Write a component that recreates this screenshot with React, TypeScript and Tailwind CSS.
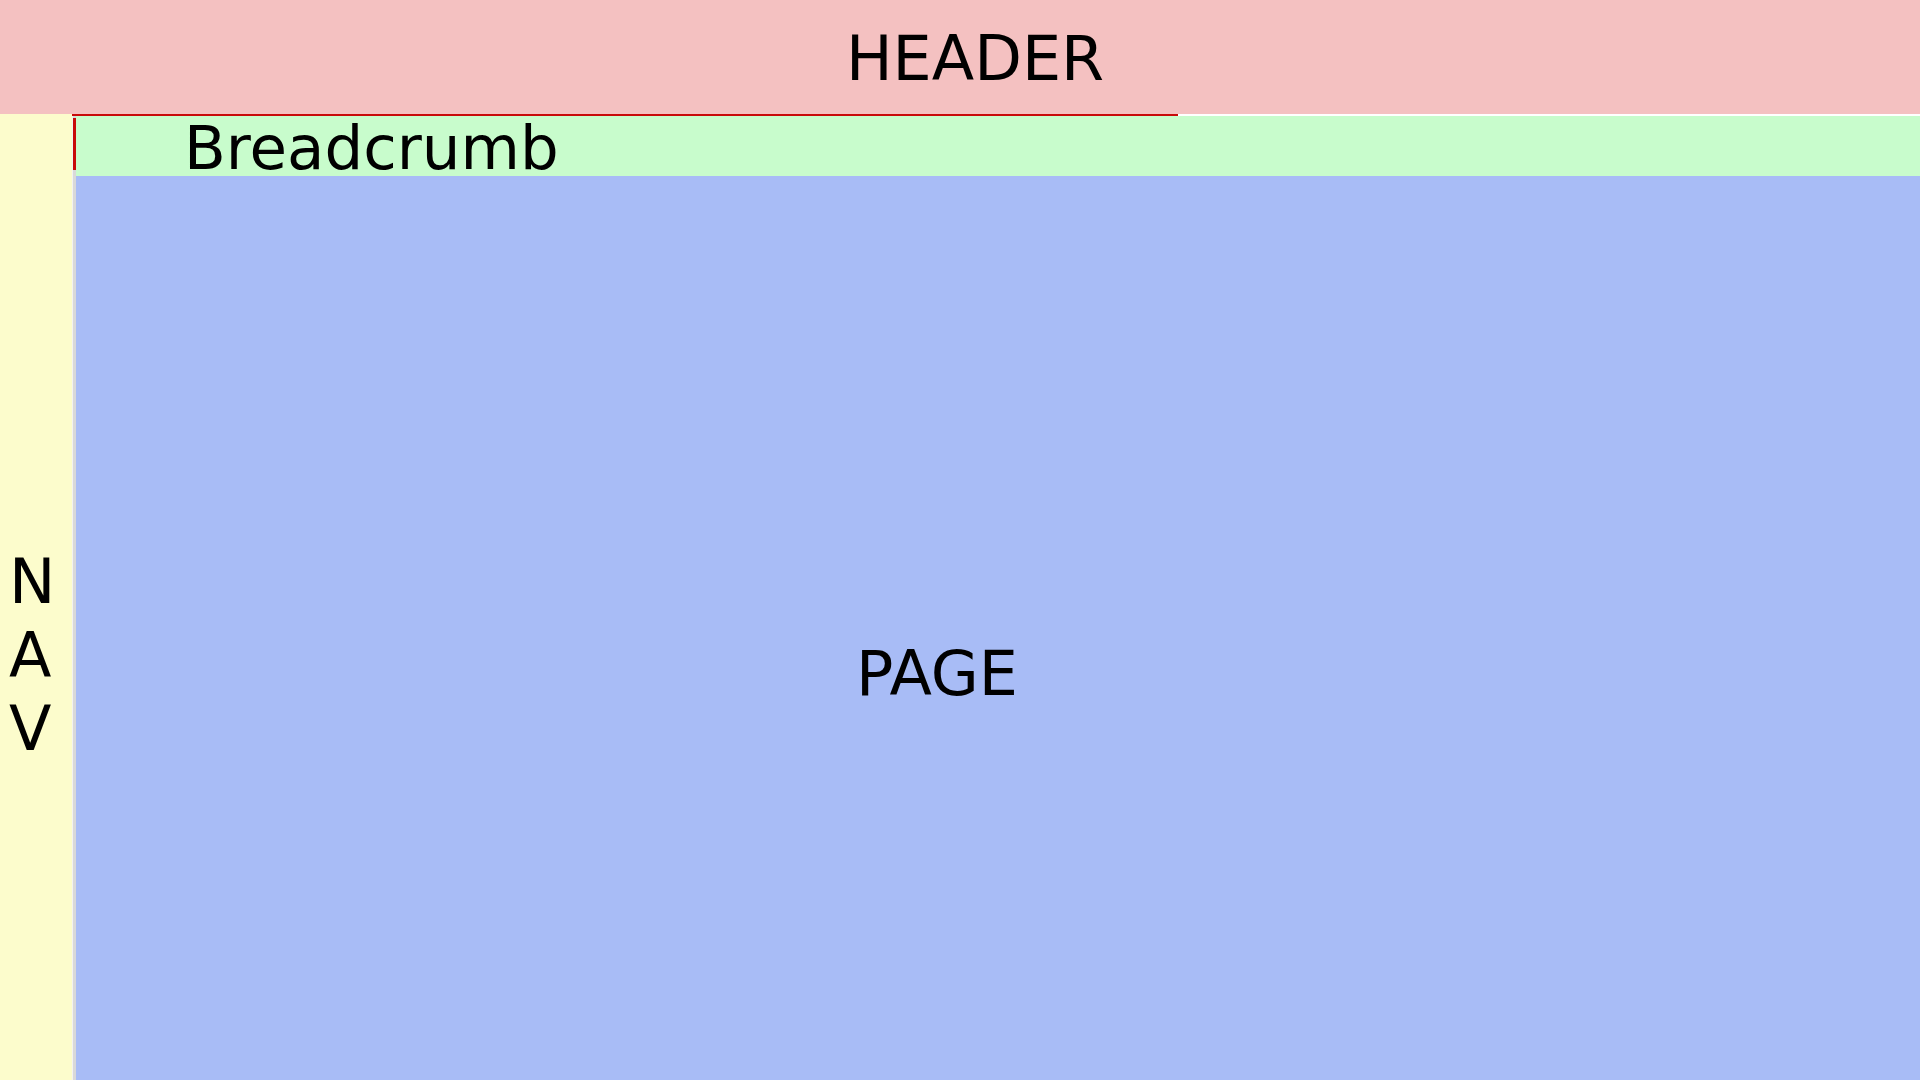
export default function App() {
  return (
    <div
      className="flex h-screen w-full flex-col overflow-hidden bg-white text-black"
      style={{ fontFamily: '"DejaVu Sans", sans-serif' }}
    >
      {/* header */}
      <header className="h-[114px] shrink-0 bg-[#f4c1c1] pl-[846px] pt-[28px] text-[62px] leading-[62px]">
        HEADER
      </header>

      <div className="flex min-h-0 flex-1">
        {/* nav */}
        <nav className="w-[72px] shrink-0 bg-[#fcfccc] pl-[9px] pt-[431px] text-[62px] leading-[73.5px]">
          <div>N</div>
          <div>A</div>
          <div>V</div>
        </nav>

        <div className="flex min-w-0 flex-1 flex-col">
          {/* focus line under header */}
          <div className="flex h-[2px] shrink-0">
            <div className="w-[1106px] bg-[#c80a0a]" />
            <div className="flex-1 bg-white" />
          </div>

          <div className="flex min-h-0 flex-1">
            {/* splitter */}
            <div className="flex w-[4px] shrink-0 flex-col border-l border-[#f2f2f2] bg-[#d9d9d9] pt-[2px]">
              <div className="h-[52px] w-[3px] bg-[#c80a0a]" />
            </div>

            <main className="flex min-w-0 flex-1 flex-col">
              <div className="h-[60px] shrink-0 bg-[#c8fccc] pl-[108px] pt-[1px] text-[61px] leading-[62px]">
                Breadcrumb
              </div>
              <div className="min-h-0 flex-1 bg-[#a8bcf6] pl-[780px] pt-[467px] text-[62px] leading-[62px]">
                PAGE
              </div>
            </main>
          </div>
        </div>
      </div>
    </div>
  );
}
